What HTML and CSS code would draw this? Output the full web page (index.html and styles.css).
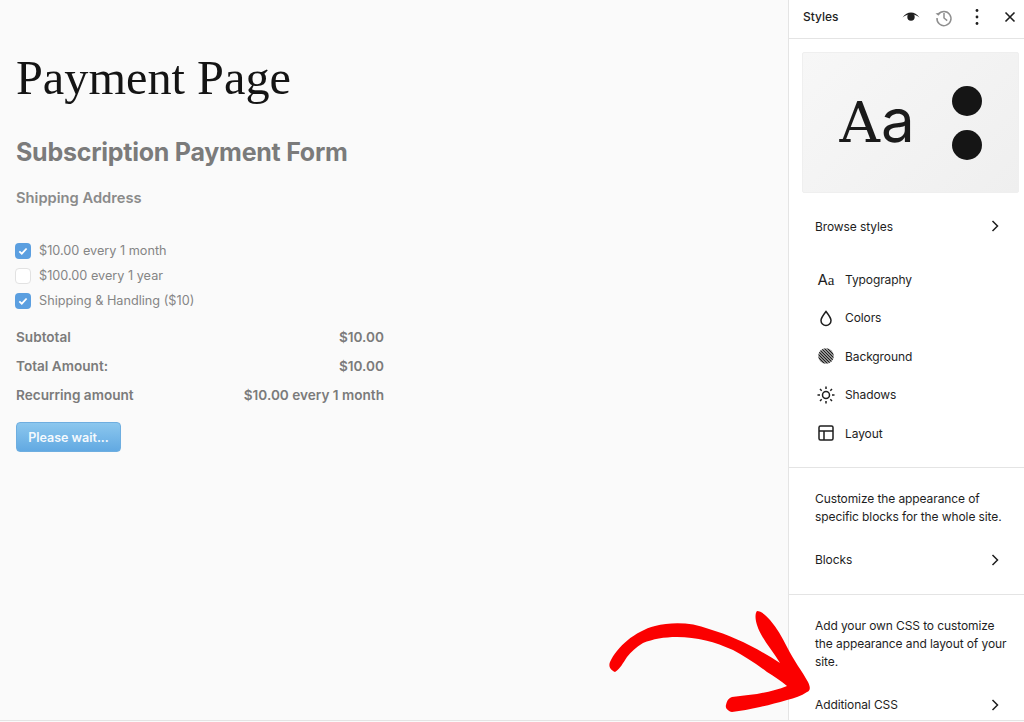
FILE: index.html
```html
<!DOCTYPE html>
<html lang="en">
<head>
    <meta charset="UTF-8">
    <meta name="viewport" content="width=device-width, initial-scale=1.0">
    <title>Payment Page</title>
    <link rel="stylesheet" href="styles.css">
</head>
<body>
    <div class="editor">
        <main class="canvas">
            <h1>Payment Page</h1>
            <h2>Subscription Payment Form</h2>
            <h3>Shipping Address</h3>
            <div class="options">
                <label class="option">
                    <span class="check checked"><svg viewBox="0 0 16 16" width="16" height="16"><path d="M4.300 8.300l2.500 2.400 4.800-5.200" fill="none" stroke="#fff" stroke-width="1.800"/></svg></span>
                    $10.00 every 1 month
                </label>
                <label class="option">
                    <span class="check"></span>
                    $100.00 every 1 year
                </label>
                <label class="option">
                    <span class="check checked"><svg viewBox="0 0 16 16" width="16" height="16"><path d="M4.300 8.300l2.500 2.400 4.800-5.200" fill="none" stroke="#fff" stroke-width="1.800"/></svg></span>
                    Shipping &amp; Handling ($10)
                </label>
            </div>
            <div class="totals">
                <div class="total-row"><span>Subtotal</span><span>$10.00</span></div>
                <div class="total-row"><span>Total Amount:</span><span>$10.00</span></div>
                <div class="total-row"><span>Recurring amount</span><span>$10.00 every 1 month</span></div>
            </div>
            <button class="wait-button">Please wait...</button>
        </main>

        <aside class="sidebar">
            <div class="side-header">
                <span class="side-title">Styles</span>
                <div class="side-tools">
                    <svg class="tool" viewBox="0 0 24 24" width="24" height="24"><path d="M3.500 12.500C6 9 8.800 7.500 12 7.500s6 1.500 8.500 5c-2.200-1.900-5-3.300-8.500-3.300s-6.300 1.400-8.500 3.300z" fill="#1e1e1e"/><circle cx="12" cy="12" r="3.700" fill="#1e1e1e"/></svg>
                    <svg class="tool" viewBox="0 0 24 24" width="24" height="24"><path d="M6.300 9.500A7 7 0 1 1 5 13" fill="none" stroke="#8f8f8f" stroke-width="1.500"/><path d="M3.500 8.500l3 2.300 1.800-3.400z" fill="#8f8f8f"/><path d="M12 8v5l3.200 2.600" fill="none" stroke="#8f8f8f" stroke-width="1.500"/></svg>
                    <svg class="tool" viewBox="0 0 24 24" width="24" height="24"><circle cx="12" cy="5.500" r="1.400" fill="#1e1e1e"/><circle cx="12" cy="12" r="1.400" fill="#1e1e1e"/><circle cx="12" cy="18.500" r="1.400" fill="#1e1e1e"/></svg>
                    <svg class="tool" viewBox="0 0 24 24" width="24" height="24"><path d="M7.500 7.500l9 9M16.500 7.500l-9 9" fill="none" stroke="#1e1e1e" stroke-width="1.600"/></svg>
                </div>
            </div>

            <div class="side-body">
                <div class="preview">
                    <span class="preview-aa">A<span>a</span></span>
                    <div class="preview-dots"><span></span><span></span></div>
                </div>
                <div class="nav-row browse">
                    <span>Browse styles</span>
                    <svg class="chevron" viewBox="0 0 24 24" width="24" height="24"><path d="M9.500 7L14.500 12l-5 5" fill="none" stroke="#1e1e1e" stroke-width="1.500"/></svg>
                </div>

                <ul class="menu">
                    <li>
                        <span class="menu-aa">A<span>a</span></span>
                        Typography
                    </li>
                    <li>
                        <svg viewBox="0 0 24 24" width="24" height="24"><path d="M12 5.500c2.800 3.600 5 6.200 5 9a5 5 0 0 1-10 0c0-2.800 2.200-5.400 5-9z" fill="none" stroke="#1e1e1e" stroke-width="1.500"/></svg>
                        Colors
                    </li>
                    <li>
                        <svg viewBox="0 0 24 24" width="24" height="24"><defs><clipPath id="hatch-clip"><circle cx="12" cy="12" r="7.800"/></clipPath></defs><path clip-path="url(#hatch-clip)" d="M-10 2l20 20M-7 2l20 20M-4 2l20 20M-1 2l20 20M2 2l20 20M5 2l20 20M8 2l20 20M11 2l20 20M14 2l20 20" fill="none" stroke="#1e1e1e" stroke-width="1.400"/></svg>
                        Background
                    </li>
                    <li>
                        <svg viewBox="0 0 24 24" width="24" height="24"><circle cx="12" cy="12" r="3.500" fill="none" stroke="#1e1e1e" stroke-width="1.500"/><path d="M12 3.500v2.500M12 18v2.500M3.500 12H6M18 12h2.500M6 6l1.700 1.700M16.300 16.300L18 18M18 6l-1.700 1.700M7.700 16.300L6 18" fill="none" stroke="#1e1e1e" stroke-width="1.500"/></svg>
                        Shadows
                    </li>
                    <li>
                        <svg viewBox="0 0 24 24" width="24" height="24"><rect x="5" y="5" width="14" height="14" rx="1.500" fill="none" stroke="#1e1e1e" stroke-width="1.500"/><path d="M5 10h14M10 10v9" fill="none" stroke="#1e1e1e" stroke-width="1.500"/></svg>
                        Layout
                    </li>
                </ul>

                <div class="section">
                    <p>Customize the appearance of specific blocks for the whole site.</p>
                    <div class="nav-row">
                        <span>Blocks</span>
                        <svg class="chevron" viewBox="0 0 24 24" width="24" height="24"><path d="M9.500 7L14.500 12l-5 5" fill="none" stroke="#1e1e1e" stroke-width="1.500"/></svg>
                    </div>
                </div>

                <div class="section last">
                    <p>Add your own CSS to customize the appearance and layout of your site.</p>
                    <div class="nav-row">
                        <span>Additional CSS</span>
                        <svg class="chevron" viewBox="0 0 24 24" width="24" height="24"><path d="M9.500 7L14.500 12l-5 5" fill="none" stroke="#1e1e1e" stroke-width="1.500"/></svg>
                    </div>
                </div>
            </div>
        </aside>

        <!-- hand drawn arrow lies over the canvas and the sidebar -->
        <svg class="arrow" viewBox="0 0 210 112" width="210" height="112">
            <path d="M1 61C8 46 26 30 46 25C62 21 82 21 100 28C124 35 148 47 171 62C163 49 152 37 148 24C146 18 146 12 148 10C152 10 157 14 161 19C168 27 173 36 178 46C185 60 193 70 199 81C202 87 201 90 198 91C192 95 186 97 178 99C168 102 160 104 151 106C141 108 132 110 123 111C119 110 116 107 117 104C118 99 120 97 123 96C131 95 139 94 148 93C158 91 169 89 178 85C172 80 165 75 158 71C146 62 135 55 124 49C106 41 88 36 68 36C55 36 44 38 34 42C27 46 22 51 18 56C14 62 11 68 6 71C2 69 -1 66 1 61z" fill="#fb0000"/>
        </svg>
    </div>
</body>
</html>
```

FILE: styles.css
```css
* {
    box-sizing: border-box;
}
body {
    margin: 0;
    font-family: 'Inter', 'Liberation Sans', sans-serif;
    background-color: #fafafa;
}
.editor {
    position: relative;
    display: flex;
    height: 721px;
    overflow: hidden;
    border-bottom: 1px solid #e4e4e4;
}
.canvas {
    width: 788px;
    padding: 0 16px;
    background-color: #fafafa;
    color: #7b7b7b;
}
h1 {
    margin: 48px 0 0;
    font-family: 'Liberation Serif', serif;
    font-size: 48.300px;
    line-height: 60px;
    font-weight: normal;
    color: #141414;
}
h2 {
    margin: 28px 0 0;
    font-size: 25px;
    line-height: 32px;
    font-weight: 700;
    letter-spacing: -0.25px;
}
h3 {
    margin: 18px 0 0;
    font-size: 14.700px;
    line-height: 24px;
    font-weight: 600;
    color: #8a8a8a;
}
.options {
    margin-top: 28px;
}
.option {
    display: flex;
    align-items: center;
    gap: 8px;
    height: 25px;
    margin-left: -1px;
    font-size: 12.700px;
    color: #858585;
}
.check {
    display: flex;
    width: 16px;
    height: 16px;
    background: #fff;
    border: 1px solid #e2e2e2;
    border-radius: 4px;
}
.check.checked {
    background: #5b9fe0;
    border: none;
}
.totals {
    margin-top: 9px;
    width: 368px;
}
.total-row {
    display: flex;
    justify-content: space-between;
    align-items: center;
    height: 29px;
    font-size: 13.600px;
    font-weight: 600;
}
.wait-button {
    display: block;
    width: 105px;
    height: 30px;
    margin-top: 13px;
    padding: 0;
    font-family: inherit;
    font-size: 12.500px;
    font-weight: 600;
    color: #f4f9fd;
    background: linear-gradient(#8cc7ee, #62a9e2);
    border: 1px solid #6eaee0;
    border-radius: 4px;
}
.sidebar {
    display: flex;
    flex-direction: column;
    width: 236px;
    background: #fff;
    border-left: 1px solid #e4e4e4;
    color: #1e1e1e;
    font-size: 12px;
    letter-spacing: -0.1px;
}
.side-header {
    flex: none;
    display: flex;
    justify-content: space-between;
    align-items: center;
    height: 39px;
    padding: 0 2px 5px 14px;
    border-bottom: 1px solid #e4e4e4;
}
.side-title {
    font-weight: 500;
    letter-spacing: 0;
}
.side-tools {
    display: flex;
    gap: 9px;
}
.side-body {
    flex: none;
}
.preview {
    display: flex;
    justify-content: center;
    align-items: center;
    gap: 36px;
    height: 141px;
    margin: 13px 5px 0 13px;
    background: linear-gradient(135deg, #f7f7f7, #efefef);
    border: 1px solid #efefef;
    border-radius: 2px;
}
.preview-aa {
    margin-bottom: 2px;
    font-family: 'DejaVu Serif', serif;
    font-size: 56px;
    line-height: 60px;
    letter-spacing: 1px;
    color: #1a1a1a;
}
.preview-aa span {
    font-family: 'Inter', sans-serif;
    font-size: 60px;
    font-weight: 400;
}
.preview-dots {
    display: flex;
    flex-direction: column;
    gap: 14px;
}
.preview-dots span {
    display: block;
    width: 30px;
    height: 30px;
    background: #151515;
    border-radius: 50%;
}
.nav-row {
    display: flex;
    justify-content: space-between;
    align-items: center;
    height: 24px;
    padding: 0 17px 0 26px;
}
.browse {
    margin-top: 21px;
}
.menu {
    list-style: none;
    margin: 22px 0 0;
    padding: 0 0 0 25px;
}
.menu li {
    display: flex;
    align-items: center;
    gap: 7px;
    height: 38.500px;
}
.menu-aa {
    width: 24px;
    text-align: center;
    font-size: 15px;
}
.menu-aa span {
    font-family: 'Liberation Serif', serif;
}
.section {
    border-top: 1px solid #e4e4e4;
    padding-top: 22px;
    margin-top: 14px;
    height: 127px;
}
.section p {
    margin: 0 10px 22px 26px;
    line-height: 18px;
}
.section.last {
    margin-top: 0;
}
.arrow {
    position: absolute;
    left: 609px;
    top: 601px;
}
```
